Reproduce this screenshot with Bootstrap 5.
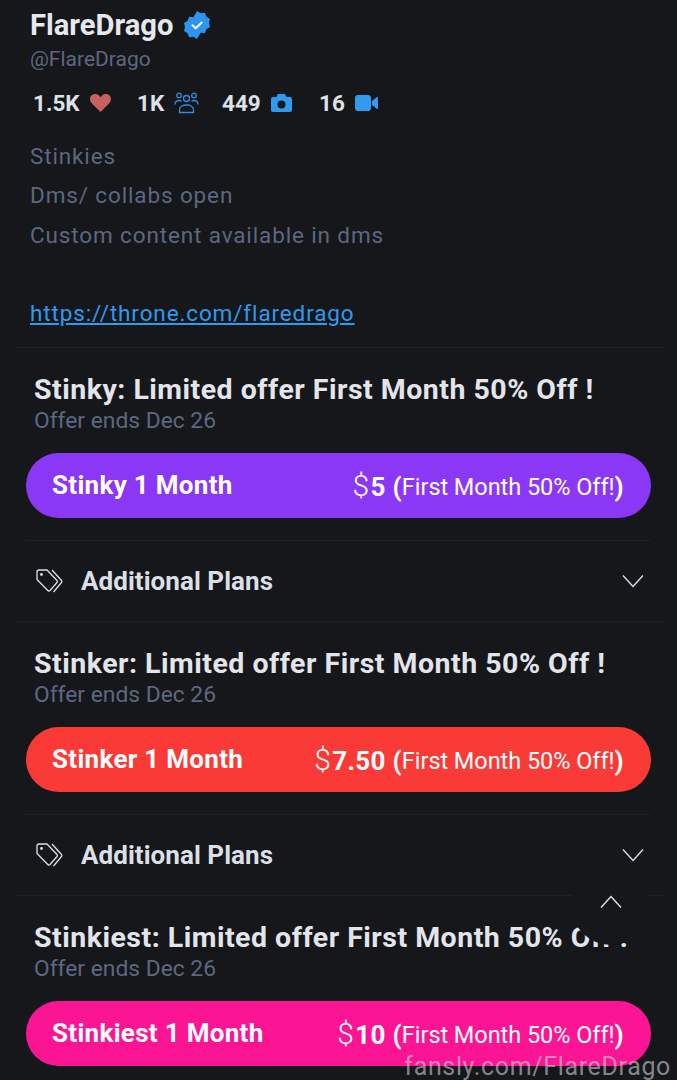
<!DOCTYPE html>
<html lang="en">
<head>
  <meta charset="UTF-8" />
  <meta name="viewport" content="width=device-width, initial-scale=1.0" />
  <title>FlareDrago</title>
  <link href="https://cdn.jsdelivr.net/npm/bootstrap@5.3.2/dist/css/bootstrap.min.css" rel="stylesheet" />
  <style>
    html, body { height: 1080px; overflow: hidden; }
    body { background: #15171b; color: #e3e5eb; font-family: Roboto, "Liberation Sans", sans-serif; position: relative; }
    .profile-box { padding: 7px 30px 0; height: 347px; }
    .profile-name { font-size: 29.2px; font-weight: 700; line-height: 36px; color: #e6e8ee; }
    .profile-handle { font-size: 21px; line-height: 26px; color: #5d6780; margin-top: 3px; }
    .stat-row { margin-top: 18px; padding-left: 3px; height: 26px; font-size: 22.5px; font-weight: 700; line-height: 26px; color: #dfe1e8; }
    .stat-gap { width: 10px; }
    .stat-item { width: 104px; }
    .stat-item.narrow { width: 85px; }
    .stat-item.mid { width: 97px; }
    .profile-bio { margin-top: 21px; font-size: 22.5px; line-height: 39.3px; letter-spacing: .87px; color: #5d6780; }
    .profile-bio a { color: #2f9aee; }
    .rule-wide { height: 1px; background: #1e2025; margin: 0 14px; }
    .rule-inner { height: 1px; background: #1e2025; margin: 0 26px; }
    .plan-head { padding: 25px 34px 0; height: 105px; }
    .plan-title { font-size: 28.5px; font-weight: 700; line-height: 34px; letter-spacing: .5px; color: #e3e5eb; white-space: nowrap; }
    .plan-ends { font-size: 22.8px; line-height: 28px; color: #5d6780; }
    .plan-btn { height: 65px; margin: 0 26px; padding: 0 27px 0 26px; border-radius: 33px; color: #fff; font-size: 26px; font-weight: 700; letter-spacing: .3px; }
    .plan-btn .dollar { font-weight: 300; font-size: 30px; margin-right: 1px; }
    .plan-btn .offer { font-weight: 400; font-size: 23.5px; letter-spacing: -.05px; vertical-align: 1.5px; }
    .bg-stinky { background: #8a38f5; }
    .bg-stinker { background: #f93a36; }
    .bg-stinkiest { background: #fb1594; }
    .plan-gap { height: 22px; }
    .plans-toggle { height: 80px; padding: 0 33px 0 36px; font-size: 26px; font-weight: 700; letter-spacing: .05px; color: #dcdfe6; }
    .plans-toggle svg { display: block; }
    .plans-label { margin-left: 17px; }
    .scroll-top { position: absolute; left: 571px; top: 865px; width: 80px; height: 80px; border-radius: 50%; background: #15171b; padding-top: 30px; }
    .watermark { position: absolute; right: 6px; bottom: -2px; font-size: 25px; line-height: 30px; letter-spacing: .65px; color: rgba(205, 208, 215, .62); }
  </style>
</head>
<body>
  <!-- profile header -->
  <div class="profile-box">
    <div class="d-flex align-items-center gap-2 profile-name">
      <span>FlareDrago</span>
      <svg width="30" height="30" viewBox="0 0 30 30">
        <path fill="#2d95f0" d="M15 1l3.600 2.200 4.200-.4 1.600 3.900 3.600 2.200-1 4.100 1 4.100-3.600 2.200-1.600 3.900-4.200-.4L15 29l-3.600-2.200-4.200.4-1.600-3.900-3.600-2.200 1-4.100-1-4.100 3.600-2.200 1.600-3.900 4.200.4z" />
        <path fill="none" stroke="#fff" stroke-width="2" stroke-linecap="round" stroke-linejoin="round" d="M10.500 15.200l3.200 3 6-5.600" />
      </svg>
    </div>
    <div class="profile-handle">@FlareDrago</div>

    <div class="d-flex align-items-center stat-row">
      <div class="d-flex align-items-center stat-item">
        <span>1.5K</span>
        <span class="stat-gap"></span>
        <svg width="21" height="18" viewBox="0 0 21 18"><path fill="#c9615f" d="M10.500 18L2 9.600C-.6 7-.6 3.200 1.700 1.300 4-.6 7.500-.3 9.400 2l1.100 1.300L11.600 2c1.900-2.300 5.400-2.600 7.700-.7 2.300 1.900 2.300 5.700-.3 8.300z" /></svg>
      </div>
      <div class="d-flex align-items-center stat-item narrow">
        <span>1K</span>
        <span class="stat-gap"></span>
        <svg width="25" height="22" viewBox="0 0 25 22" fill="none" stroke="#2f8fdc" stroke-width="1.300">
          <circle cx="12.500" cy="6.500" r="3" /><circle cx="5" cy="3.500" r="2.300" /><circle cx="20" cy="3.500" r="2.300" />
          <path d="M5.500 20.500v-2.500c0-3 3-5 7-5s7 2 7 5v2.500z" />
          <path d="M1 12.500c0-2.500 1.500-4 4-4 1 0 1.800.2 2.500.7M24 12.500c0-2.500-1.500-4-4-4-1 0-1.800.2-2.500.7" />
        </svg>
      </div>
      <div class="d-flex align-items-center stat-item mid">
        <span>449</span>
        <span class="stat-gap"></span>
        <svg width="21" height="18" viewBox="0 0 21 18"><path fill="#2f9aee" fill-rule="evenodd" d="M7 0h7l1.500 3H19a2 2 0 0 1 2 2v11a2 2 0 0 1-2 2H2a2 2 0 0 1-2-2V5a2 2 0 0 1 2-2h3.500zM10.500 6.500a4 4 0 1 0 0 8 4 4 0 0 0 0-8z" /></svg>
      </div>
      <div class="d-flex align-items-center stat-item">
        <span>16</span>
        <span class="stat-gap"></span>
        <svg width="23" height="16" viewBox="0 0 23 16"><rect width="16" height="16" rx="3" fill="#2f9aee" /><path fill="#2f9aee" d="M17 6l5-4c.5-.3 1 0 1 .6v10.800c0 .6-.5.9-1 .6l-5-4z" /></svg>
      </div>
    </div>

    <div class="profile-bio">
      Stinkies<br />
      Dms/ collabs open<br />
      Custom content available in dms<br />
      <br />
      <a href="#">https://throne.com/flaredrago</a>
    </div>
  </div>
  <div class="rule-wide"></div>

  <!-- subscription tiers -->
  <div class="plan-head">
    <div class="plan-title">Stinky: Limited offer First Month 50% Off !</div>
    <div class="plan-ends">Offer ends Dec 26</div>
  </div>
  <div class="d-flex justify-content-between align-items-center plan-btn bg-stinky">
    <span>Stinky 1 Month</span>
    <span><span class="dollar">$</span>5 (<span class="offer">First Month 50% Off!</span>)</span>
  </div>
  <div class="plan-gap"></div>
  <div class="rule-inner"></div>
  <div class="d-flex align-items-center plans-toggle">
    <svg width="28" height="24" viewBox="0 0 28 24" fill="none" stroke="#dcdfe6" stroke-width="1.300" stroke-linejoin="round">
      <path d="M1 3a2 2 0 0 1 2-2h8l10 10.500a1.500 1.500 0 0 1 0 2L14 21.500a1.500 1.500 0 0 1-2.200 0L1 10.500z" />
      <path d="M16 1l9.500 10.500a1.500 1.500 0 0 1 0 2L17.500 23" />
      <circle cx="5.500" cy="5.500" r=".8" fill="#dcdfe6" />
    </svg>
    <span class="plans-label">Additional Plans</span>
    <svg class="ms-auto" width="22" height="14" viewBox="0 0 22 14" fill="none" stroke="#dcdfe6" stroke-width="1.400"><path d="M1 1.500l10 11 10-11" /></svg>
  </div>
  <div class="rule-wide"></div>

  <div class="plan-head">
    <div class="plan-title">Stinker: Limited offer First Month 50% Off !</div>
    <div class="plan-ends">Offer ends Dec 26</div>
  </div>
  <div class="d-flex justify-content-between align-items-center plan-btn bg-stinker">
    <span>Stinker 1 Month</span>
    <span><span class="dollar">$</span>7.50 (<span class="offer">First Month 50% Off!</span>)</span>
  </div>
  <div class="plan-gap"></div>
  <div class="rule-inner"></div>
  <div class="d-flex align-items-center plans-toggle">
    <svg width="28" height="24" viewBox="0 0 28 24" fill="none" stroke="#dcdfe6" stroke-width="1.300" stroke-linejoin="round">
      <path d="M1 3a2 2 0 0 1 2-2h8l10 10.500a1.500 1.500 0 0 1 0 2L14 21.500a1.500 1.500 0 0 1-2.200 0L1 10.500z" />
      <path d="M16 1l9.500 10.500a1.500 1.500 0 0 1 0 2L17.500 23" />
      <circle cx="5.500" cy="5.500" r=".8" fill="#dcdfe6" />
    </svg>
    <span class="plans-label">Additional Plans</span>
    <svg class="ms-auto" width="22" height="14" viewBox="0 0 22 14" fill="none" stroke="#dcdfe6" stroke-width="1.400"><path d="M1 1.500l10 11 10-11" /></svg>
  </div>
  <div class="rule-wide"></div>

  <div class="plan-head">
    <div class="plan-title">Stinkiest: Limited offer First Month 50% Off !</div>
    <div class="plan-ends">Offer ends Dec 26</div>
  </div>
  <div class="d-flex justify-content-between align-items-center plan-btn bg-stinkiest">
    <span>Stinkiest 1 Month</span>
    <span><span class="dollar">$</span>10 (<span class="offer">First Month 50% Off!</span>)</span>
  </div>

  <!-- floating scroll-to-top button -->
  <div class="scroll-top d-flex justify-content-center">
    <svg width="22" height="14" viewBox="0 0 22 14" fill="none" stroke="#e3e5eb" stroke-width="1.400"><path d="M1 12.500l10-11 10 11" /></svg>
  </div>
  <div class="watermark">fansly.com/FlareDrago</div>

  <script src="https://cdn.jsdelivr.net/npm/bootstrap@5.3.2/dist/js/bootstrap.bundle.min.js"></script>
</body>
</html>
